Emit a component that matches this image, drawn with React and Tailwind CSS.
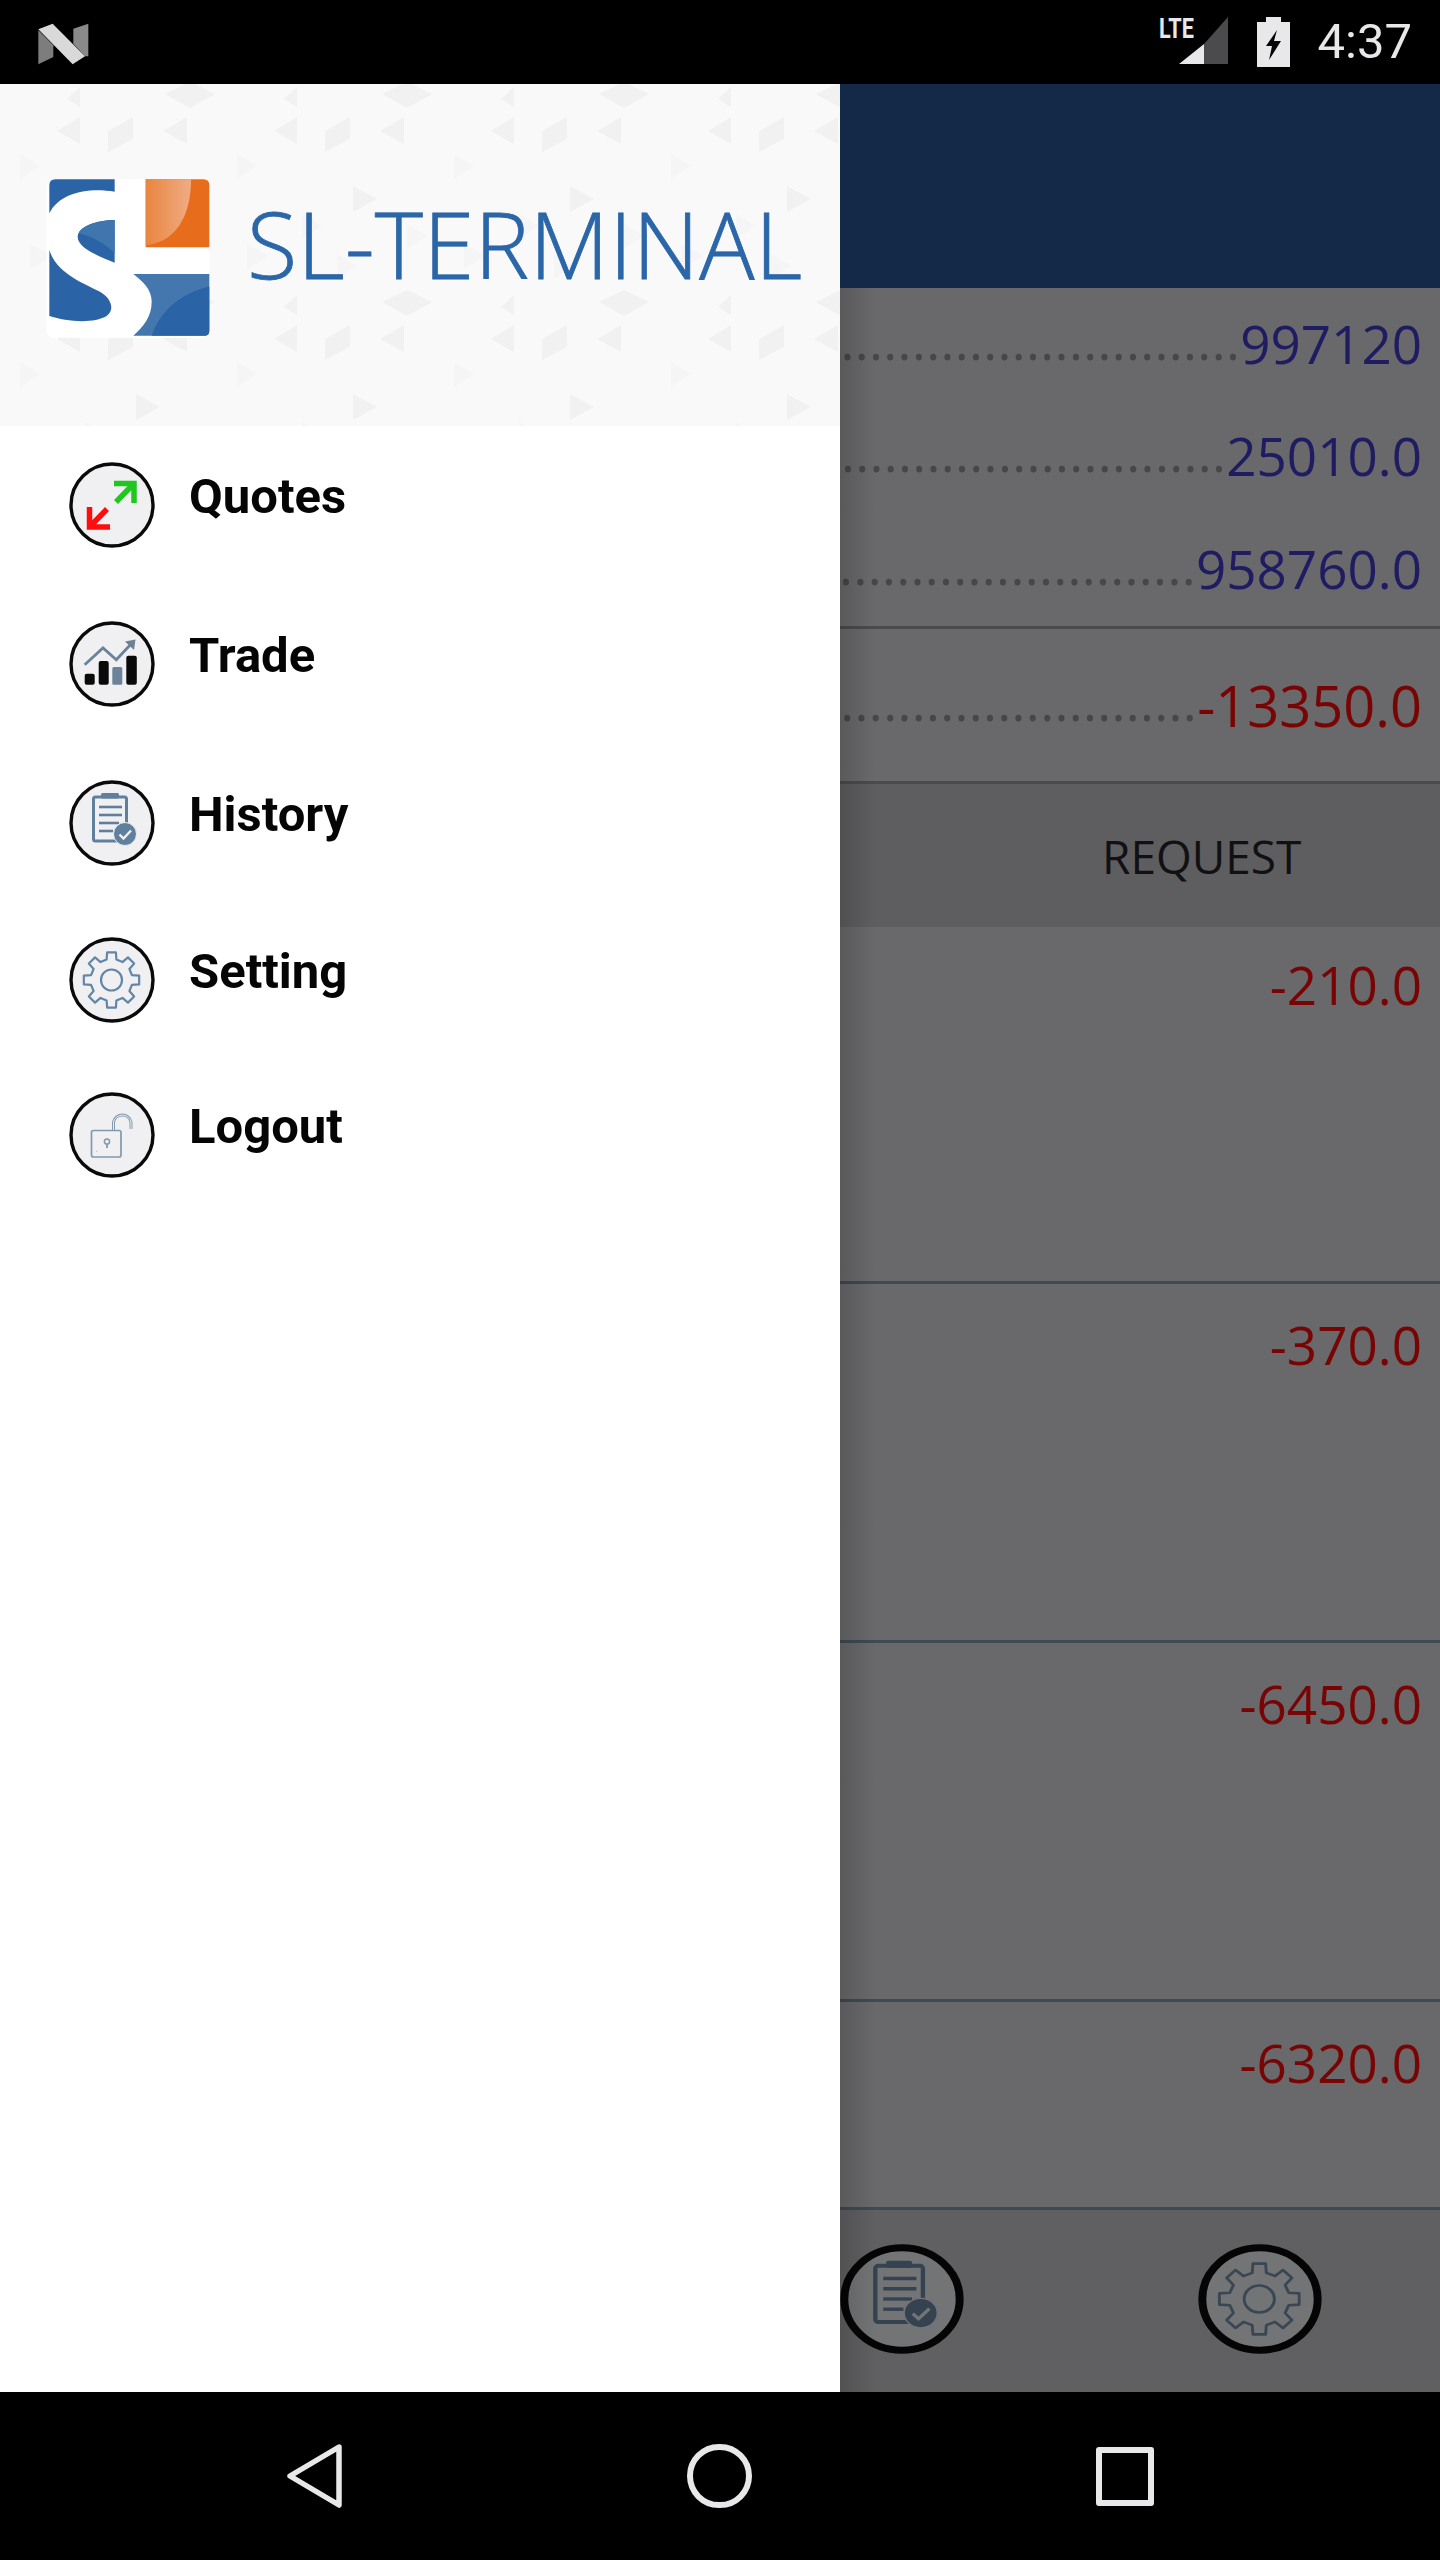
import React from 'react';

const gearPath = (cx, cy, outer, inner, teeth = 8) => {
  const pts = [];
  const step = (Math.PI * 2) / teeth;
  for (let i = 0; i < teeth; i++) {
    const a = i * step - Math.PI / 2;
    const w = step * 0.2;
    const w2 = step * 0.3;
    [[a - w2, inner], [a - w, outer], [a + w, outer], [a + w2, inner]].forEach(([t, r]) => {
      pts.push(`${(cx + Math.cos(t) * r).toFixed(2)} ${(cy + Math.sin(t) * r).toFixed(2)}`);
    });
  }
  return `M${pts.join(' L')} Z`;
};

const IconCircle = ({ className, dark, children }) => (
  <svg viewBox="0 0 86 86" preserveAspectRatio="none" className={className}>
    <ellipse
      cx="43"
      cy="43"
      rx={dark ? 40 : 41}
      ry={dark ? 40 : 41}
      fill={dark ? '#737476' : '#f0f0f2'}
      stroke={dark ? '#050505' : '#0a0a0a'}
      strokeWidth={dark ? 5.5 : 3.4}
    />
    {children}
  </svg>
);

const QuotesGlyph = () => (
  <g fill="none" strokeWidth="5.5">
    <g stroke="#1fc71f">
      <path d="M45 21.5H65V41" />
      <path d="M64 22.5L47 40" />
    </g>
    <g stroke="#ff0d0d">
      <path d="M20.5 45V65H41" />
      <path d="M21.5 64L38 47" />
    </g>
  </g>
);

const TradeGlyph = () => (
  <g>
    <rect x="15.7" y="52.7" width="10" height="11" rx="2" fill="#0a0a0a" />
    <rect x="29.7" y="40" width="10" height="23.7" rx="2" fill="#0a0a0a" />
    <rect x="43.3" y="46" width="10" height="17.7" rx="1.5" fill="#6b8299" />
    <rect x="57.3" y="34.7" width="10.5" height="29" rx="2" fill="#0a0a0a" />
    <path d="M15.7 43.7L34 27L47.3 38.7L63 22" fill="none" stroke="#6b8299" strokeWidth="2.8" />
    <path d="M56 20.5L66.5 18.5L65 29Z" fill="#6b8299" />
  </g>
);

const HistoryGlyph = ({ color = '#5f7f9c', check = '#f0f0f2' }) => (
  <g>
    <rect x="24.5" y="17" width="33" height="44" rx="2" fill="none" stroke={color} strokeWidth="3" />
    <rect x="32" y="13" width="18" height="5.5" rx="1.5" fill={color} />
    <g stroke={color} strokeWidth="2.6">
      <path d="M30 27H53" />
      <path d="M30 35H53" />
      <path d="M30 43H50" />
      <path d="M30 51H44" />
    </g>
    <circle cx="56" cy="54" r="11.5" fill={color} stroke={check} strokeWidth="1" />
    <path d="M50.5 54.5L54.5 58.5L62 50.5" fill="none" stroke={check} strokeWidth="2.4" />
  </g>
);

const GearGlyph = ({ color = '#6386a6', width = 2.2 }) => (
  <g fill="none" stroke={color} strokeWidth={width} strokeLinejoin="round">
    <path d={gearPath(42.5, 43, 28, 21)} />
    <circle cx="42.5" cy="43" r="10.5" />
  </g>
);

const LogoutGlyph = () => (
  <g fill="none">
    <rect x="22.5" y="38.5" width="29.5" height="26.5" rx="2" stroke="#8199ad" strokeWidth="1.7" />
    <path d="M44.5 38V30a9 9 0 0 1 17.5 0V37" stroke="#8199ad" strokeWidth="3" />
    <path d="M44.5 38V30a9 9 0 0 1 17.5 0V37" stroke="#f0f0f2" strokeWidth="1" />
    <circle cx="38" cy="49.5" r="2.6" stroke="#8199ad" strokeWidth="1.5" />
    <path d="M38 52V56" stroke="#8199ad" strokeWidth="1.8" />
    <path d="M27 60L29 58" stroke="#8199ad" strokeWidth="0.8" strokeDasharray="1 1.5" />
  </g>
);

const menuItems = [
  { label: 'Quotes', Glyph: QuotesGlyph, height: 'h-[158px]' },
  { label: 'Trade', Glyph: TradeGlyph, height: 'h-[160px]' },
  { label: 'History', Glyph: HistoryGlyph, height: 'h-[158px]' },
  { label: 'Setting', Glyph: GearGlyph, height: 'h-[156px]' },
  { label: 'Logout', Glyph: LogoutGlyph, height: 'h-[154px]' },
];

const StatusBar = () => (
  <div className="flex h-[84px] items-center bg-black pl-[37px] pr-[28px]">
    <svg viewBox="0 0 240 180" className="-ml-[17px] h-[60px] w-[80px]">
      <path d="M55 55L100 100V135L55 157Z" fill="#7d7d7d" />
      <path d="M160 50L205 35V133L195 133L160 95Z" fill="#8a8a8a" />
      <path d="M55 52L98 35L195 133L158 157Z" fill="#d9d9d9" />
    </svg>
    <div className="relative ml-auto h-[50px] w-[60px]">
      <svg viewBox="0 0 60 50" className="h-[50px] w-[60px]">
        <path d="M11 47L36 27V47Z" fill="#e8e8ea" />
        <path d="M36 27L60 0V47H36Z" fill="#4b4b4e" />
      </svg>
      <span className="absolute -left-[9px] -top-[4px] origin-left scale-x-[0.8] font-['Roboto',sans-serif] text-[27px] font-bold leading-[32px] text-[#e8e8ea]">
        LTE
      </span>
    </div>
    <svg viewBox="0 0 33 50" className="ml-[29px] h-[50px] w-[33px]">
      <path d="M0 5H9V0H24V5H33V50H0Z" fill="#e8e8ea" />
      <path d="M20 13L9 29H15L12 43L24 24H17Z" fill="#050505" />
    </svg>
    <span className="ml-[28px] font-['Roboto',sans-serif] text-[49px] leading-[56px] text-[#e8e8ea]">4:37</span>
  </div>
);

const NavBar = () => (
  <div className="flex h-[168px] items-center gap-[345px] bg-black pl-[287px]">
    <svg viewBox="0 0 55 64" className="h-[64px] w-[55px]">
      <path d="M52 3L3 32L52 61Z" fill="none" stroke="#e8e8ea" strokeWidth="5.5" strokeLinejoin="round" />
    </svg>
    <div className="h-[64px] w-[65px] rounded-full border-[6px] border-[#e8e8ea]" />
    <div className="-ml-px h-[59px] w-[58px] rounded-[3px] border-[6px] border-[#e8e8ea]" />
  </div>
);

const HeaderPattern = () => (
  <svg className="absolute inset-0 h-full w-full">
    <defs>
      <pattern id="tri" width="217" height="208" patternUnits="userSpaceOnUse">
        <g fill="#f1f1f2">
          <path d="M165 10L190 -2L215 10L190 24Z" />
          <path d="M165 218L190 206L215 218L190 232Z" />
          <path d="M80 3L67 15L80 23Z" />
          <path d="M80 33L57 47L80 60Z" />
          <path d="M133 33L108 47V68L133 55Z" />
          <path d="M187 33L163 47L187 60Z" />
          <path d="M136 102L160 115L136 128Z" />
        </g>
        <g fill="#f5f5f6">
          <path d="M20 70L40 82L20 95Z" />
          <path d="M85 130L105 142L85 155Z" />
          <path d="M190 140L210 152L190 165Z" />
          <path d="M30 160L52 172L30 185Z" />
          <path d="M120 170L140 182L120 195Z" />
        </g>
      </pattern>
    </defs>
    <rect width="100%" height="100%" fill="#f9f9fa" />
    <rect width="100%" height="100%" fill="url(#tri)" />
  </svg>
);

const Logo = () => (
  <svg viewBox="0 0 540 525" className="h-[175px] w-[180px] shrink-0">
    <defs>
      <linearGradient id="shine" x1="0" x2="1" y1="0" y2="0">
        <stop offset="0" stopColor="#e9853f" />
        <stop offset="1" stopColor="#f0ac84" />
      </linearGradient>
    </defs>
    <rect x="20" y="28" width="488" height="475" rx="20" fill="#fff" />
    <path d="M28 46Q28 28 46 28H224V65C150 52 60 65 28 130Z" fill="#2a64a6" />
    <path d="M224 150C170 150 115 170 113 200C113 235 180 260 224 278Z" fill="#2a64a6" />
    <path d="M224 150C180 150 125 165 116 190C160 200 200 225 224 250Z" fill="#4076ae" />
    <path d="M28 240C50 310 130 340 180 365C215 385 225 420 200 438C160 462 80 455 28 438Z" fill="#2a64a6" />
    <path d="M280 312H508V482Q508 497 493 497H280C310 470 335 440 335 395C335 360 310 335 280 312Z" fill="#4377ae" />
    <path d="M335 497C360 420 430 365 508 350V482Q508 497 493 497Z" fill="#2a64a6" />
    <path d="M317 28H490Q508 28 508 46V232H317Z" fill="#e76d1c" />
    <path d="M317 28H453C453 120 420 215 317 226Z" fill="url(#shine)" />
  </svg>
);

const Drawer = () => (
  <aside className="flex w-[840px] shrink-0 flex-col bg-white">
    <div className="relative h-[342px] overflow-hidden">
      <HeaderPattern />
      <div className="relative flex h-full items-start pl-[40px] pt-[86px]">
        <Logo />
        <span className="ml-[27px] mt-[11px] whitespace-nowrap font-['Open_Sans',sans-serif] text-[92px] font-light leading-[125px] tracking-[0.3px] text-[#2a66a8] [-webkit-text-stroke:0.8px_#2a66a8]">
          SL-TERMINAL
        </span>
      </div>
    </div>
    <nav className="flex flex-col pl-[69px]">
      {menuItems.map(({ label, Glyph, height }) => (
        <div key={label} className={`flex items-center gap-[34px] ${height}`}>
          <IconCircle className="h-[86px] w-[86px] shrink-0">
            <Glyph />
          </IconCircle>
          <span className="pb-[17px] font-['Roboto',sans-serif] text-[49px] font-bold leading-[56px] text-[#050505]">
            {label}
          </span>
        </div>
      ))}
    </nav>
  </aside>
);

const valueClass = "font-['Open_Sans',sans-serif] leading-[72px]";

const SummaryRow = ({ value, color, dots, size = 'text-[53px]', className = '' }) => (
  <div className={`flex items-center justify-end whitespace-nowrap pr-[18px] ${className}`}>
    <span className={`${valueClass} -translate-y-[4px] text-[53px] tracking-[0.35px] text-[#47474a]`}>
      {'.'.repeat(dots)}
    </span>
    <span className={`${valueClass} shrink-0 ${size} ${color}`}>{value}</span>
  </div>
);

const OrderRow = ({ value, className }) => (
  <div className={`border-b-[3px] border-[#3f4a52] pr-[18px] text-right ${className}`}>
    <span className={`${valueClass} text-[53px] text-[#780404]`}>{value}</span>
  </div>
);

const Main = () => (
  <main className="relative min-w-0 flex-1 overflow-hidden bg-[#69686b]">
    <div className="h-[204px] bg-[#142848]" />
    <div className="flex h-[341px] flex-col border-b-[3px] border-[#4b4b4e]">
      <SummaryRow value="997120" dots={28} color="text-[#1f1c62]" className="h-[112px]" />
      <SummaryRow value="25010.0" dots={27} color="text-[#1f1c62]" className="h-[113px]" />
      <SummaryRow value="958760.0" dots={25} color="text-[#1f1c62]" className="h-[114px]" />
    </div>
    <div className="h-[155px] border-b-[3px] border-[#4b4b4e]">
      <SummaryRow value="-13350.0" dots={25} size="text-[56px]" color="text-[#780404]" className="h-[152px]" />
    </div>
    <div className="flex h-[143px] items-center bg-[#5e5d60] pl-[262px]">
      <span className="font-['Open_Sans',sans-serif] text-[46px] leading-[60px] text-[#111114]">REQUEST</span>
    </div>
    <OrderRow value="-210.0" className="h-[357px] pt-[22px]" />
    <OrderRow value="-370.0" className="h-[359px] pt-[25px]" />
    <OrderRow value="-6450.0" className="h-[359px] pt-[25px]" />
    <OrderRow value="-6320.0" className="h-[208px] pt-[25px]" />
    <div className="flex h-[184px] items-center gap-[234px] bg-[#605f62] pb-[6px]">
      <IconCircle dark className="h-[110px] w-[124px] shrink-0">
        <HistoryGlyph color="#34434f" check="#737476" />
      </IconCircle>
      <IconCircle dark className="h-[110px] w-[124px] shrink-0">
        <GearGlyph color="#3a4753" width={2} />
      </IconCircle>
    </div>
    <div className="absolute inset-y-0 left-0 top-[204px] w-[36px] bg-gradient-to-r from-black/15 to-transparent" />
  </main>
);

export default function App() {
  return (
    <div className="flex h-[2560px] w-[1440px] flex-col overflow-hidden bg-black">
      <StatusBar />
      <div className="flex min-h-0 flex-1">
        <Drawer />
        <Main />
      </div>
      <NavBar />
    </div>
  );
}
